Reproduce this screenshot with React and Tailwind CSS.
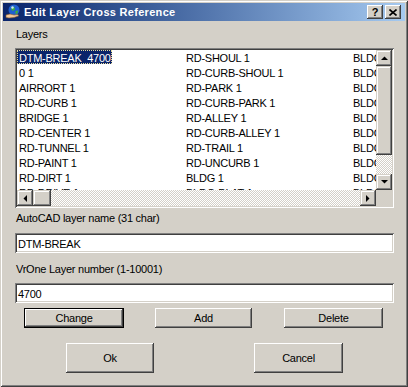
const raised =
  "shadow-[inset_-1px_-1px_#404040,inset_1px_1px_#fff,inset_-2px_-2px_#808080,inset_2px_2px_#d4d0c8]";
const sbRaised =
  "shadow-[inset_-1px_-1px_#404040,inset_1px_1px_#d4d0c8,inset_-2px_-2px_#808080,inset_2px_2px_#fff]";
const sunken =
  "shadow-[inset_1px_1px_#808080,inset_-1px_-1px_#fff,inset_2px_2px_#404040,inset_-2px_-2px_#d4d0c8]";
const checker =
  "bg-[repeating-conic-gradient(#fff_0%_25%,#d4d0c8_0%_50%)] bg-[length:2px_2px]";

const columns = [
  [
    "DTM-BREAK\u00a0\u00a04700",
    "0 1",
    "AIRRORT 1",
    "RD-CURB 1",
    "BRIDGE 1",
    "RD-CENTER 1",
    "RD-TUNNEL 1",
    "RD-PAINT 1",
    "RD-DIRT 1",
    "RD-DRIVE 1",
  ],
  [
    "RD-SHOUL 1",
    "RD-CURB-SHOUL 1",
    "RD-PARK 1",
    "RD-CURB-PARK 1",
    "RD-ALLEY 1",
    "RD-CURB-ALLEY 1",
    "RD-TRAIL 1",
    "RD-UNCURB 1",
    "BLDG 1",
    "BLDG-PLAT 1",
  ],
  [
    "BLDG-ROOF 1",
    "BLDG-WALL 1",
    "BLDG-PORCH 1",
    "BLDG-SHED 1",
    "BLDG-RUIN 1",
    "BLDG-DECK 1",
    "BLDG-POOL 1",
    "BLDG-TANK 1",
    "BLDG-SILO 1",
    "BLDG-TOWER 1",
  ],
];

// flechas de las barras de desplazamiento
function Arrow({ dir }) {
  const pts = {
    up: "0,4 7,4 3.5,0.5",
    down: "0,0 7,0 3.5,3.5",
    left: "4,0 4,7 0.5,3.5",
    right: "0,0 0,7 3.5,3.5",
  };
  const vertical = dir === "up" || dir === "down";
  return (
    <svg
      width={vertical ? 7 : 4}
      height={vertical ? 4 : 7}
      viewBox={vertical ? "0 0 7 4" : "0 0 4 7"}
    >
      <polygon points={pts[dir]} fill="#000" />
    </svg>
  );
}

function ScrollButton({ dir }) {
  return (
    <div
      className={`w-[16px] h-[16px] shrink-0 bg-[#d4d0c8] flex items-center justify-center ${sbRaised}`}
    >
      <Arrow dir={dir} />
    </div>
  );
}

function PushButton({ label, width, height, isDefault }) {
  return (
    <div
      className={`flex items-center justify-center bg-[#d4d0c8] ${
        isDefault ? "border border-black" : ""
      }`}
      style={{ width, height }}
    >
      <div className={`w-full h-full flex items-center justify-center ${raised}`}>
        {label}
      </div>
    </div>
  );
}

function TitleIcon() {
  return (
    <svg width="16" height="16" viewBox="0 0 16 16">
      <circle cx="9" cy="6" r="5.5" fill="#1f5fd0" />
      <path d="M6 3 L9 2.5 L10 5 L8 7 L6.5 6 Z" fill="#3fae3a" />
      <path d="M10.5 7 L13 6.5 L12.5 9.5 L10.5 10 Z" fill="#3fae3a" />
      <circle cx="7.5" cy="3.5" r="1.2" fill="#cfe4ff" />
      <path
        d="M1 11 L5 10 L9 11 L13 10.5 L13.5 12 L9 13.5 L4 14 L1 13.5 Z"
        fill="#f2c89b"
        stroke="#8a5a2b"
        strokeWidth="0.6"
      />
    </svg>
  );
}

export default function App() {
  return (
    <div
      className="w-[408px] h-[387px] bg-[#d4d0c8] p-[3px] flex flex-col text-[11px] text-black tracking-[-0.25px] font-['Liberation_Sans',Arial,sans-serif] shadow-[inset_1px_1px_#d4d0c8,inset_-1px_-1px_#404040,inset_2px_2px_#fff,inset_-2px_-2px_#808080] overflow-hidden select-none"
    >
      {/* barra de titulo */}
      <div className="h-[18px] shrink-0 flex items-center pl-[2px] pr-[4px] bg-linear-to-r from-[#0a246a] to-[#a6caf0]">
        <TitleIcon />
        <span className="ml-[3px] text-white font-bold tracking-[0.3px] leading-[18px]">
          Edit Layer Cross Reference
        </span>
        <div className="ml-auto flex gap-[2px]">
          <div
            className={`w-[16px] h-[14px] bg-[#d4d0c8] flex items-center justify-center font-bold text-[11px] leading-none tracking-normal ${raised}`}
          >
            ?
          </div>
          <div
            className={`w-[16px] h-[14px] bg-[#d4d0c8] flex items-center justify-center ${raised}`}
          >
            <svg width="8" height="7" viewBox="0 0 8 7">
              <path d="M0.5 0.5 L7.5 6.5 M7.5 0.5 L0.5 6.5" stroke="#000" strokeWidth="1.6" />
            </svg>
          </div>
        </div>
      </div>

      <div className="flex flex-col pl-[12px] pr-[11px]">
        <div className="mt-[7px] h-[13px] leading-[13px] pl-[1px]">Layers</div>

        {/* lista de capas */}
        <div className={`mt-[7px] w-[379px] h-[160px] p-[2px] bg-white ${sunken}`}>
          <div className="flex">
            <div className="w-[359px] h-[140px] overflow-hidden flex">
              {columns.map((col, ci) => (
                <div key={ci} className="w-[167px] shrink-0 flex flex-col">
                  {col.map((item, ri) => {
                    const selected = ci === 0 && ri === 0;
                    return (
                      <div key={ri} className="h-[15px] shrink-0 flex items-start whitespace-nowrap">
                        <span
                          className={`h-[14px] leading-[16px] pl-[2px] pr-[1px] ${
                            selected
                              ? "bg-[#0a246a] text-white outline outline-1 outline-dotted outline-[#e8dd9a] -outline-offset-1"
                              : ""
                          }`}
                        >
                          {item}
                        </span>
                      </div>
                    );
                  })}
                </div>
              ))}
            </div>
            <div className="w-[16px] h-[140px] flex flex-col">
              <ScrollButton dir="up" />
              <div className={`w-[16px] h-[89px] bg-[#d4d0c8] ${sbRaised}`} />
              <div className={`w-[16px] h-[19px] ${checker}`} />
              <ScrollButton dir="down" />
            </div>
          </div>
          <div className="flex">
            <div className="w-[359px] h-[16px] flex">
              <ScrollButton dir="left" />
              <div className={`w-[18px] h-[16px] bg-[#d4d0c8] ${sbRaised}`} />
              <div className={`flex-1 h-[16px] ${checker}`} />
              <ScrollButton dir="right" />
            </div>
            <div className="w-[16px] h-[16px] bg-[#d4d0c8]" />
          </div>
        </div>

        <div className="mt-[4px] h-[13px] leading-[13px] pl-[1px]">AutoCAD layer name (31 char)</div>
        <div
          className={`mt-[8px] w-[379px] h-[20px] bg-white pl-[3px] flex items-center leading-[13px] pt-[2px] ${sunken}`}
        >
          DTM-BREAK
        </div>

        <div className="mt-[10px] h-[13px] leading-[13px] pl-[1px]">VrOne Layer number (1-10001)</div>
        <div
          className={`mt-[7px] w-[379px] h-[20px] bg-white pl-[3px] flex items-center leading-[13px] pt-[2px] ${sunken}`}
        >
          4700
        </div>

        <div className="mt-[5px] flex">
          <div className="ml-[9px]">
            <PushButton label="Change" width={100} height={20} isDefault />
          </div>
          <div className="ml-[31px]">
            <PushButton label="Add" width={97} height={20} />
          </div>
          <div className="ml-[32px]">
            <PushButton label="Delete" width={99} height={20} />
          </div>
        </div>

        <div className="mt-[15px] flex">
          <div className="ml-[51px]">
            <PushButton label="Ok" width={88} height={30} />
          </div>
          <div className="ml-[100px]">
            <PushButton label="Cancel" width={89} height={30} />
          </div>
        </div>
      </div>
    </div>
  );
}
